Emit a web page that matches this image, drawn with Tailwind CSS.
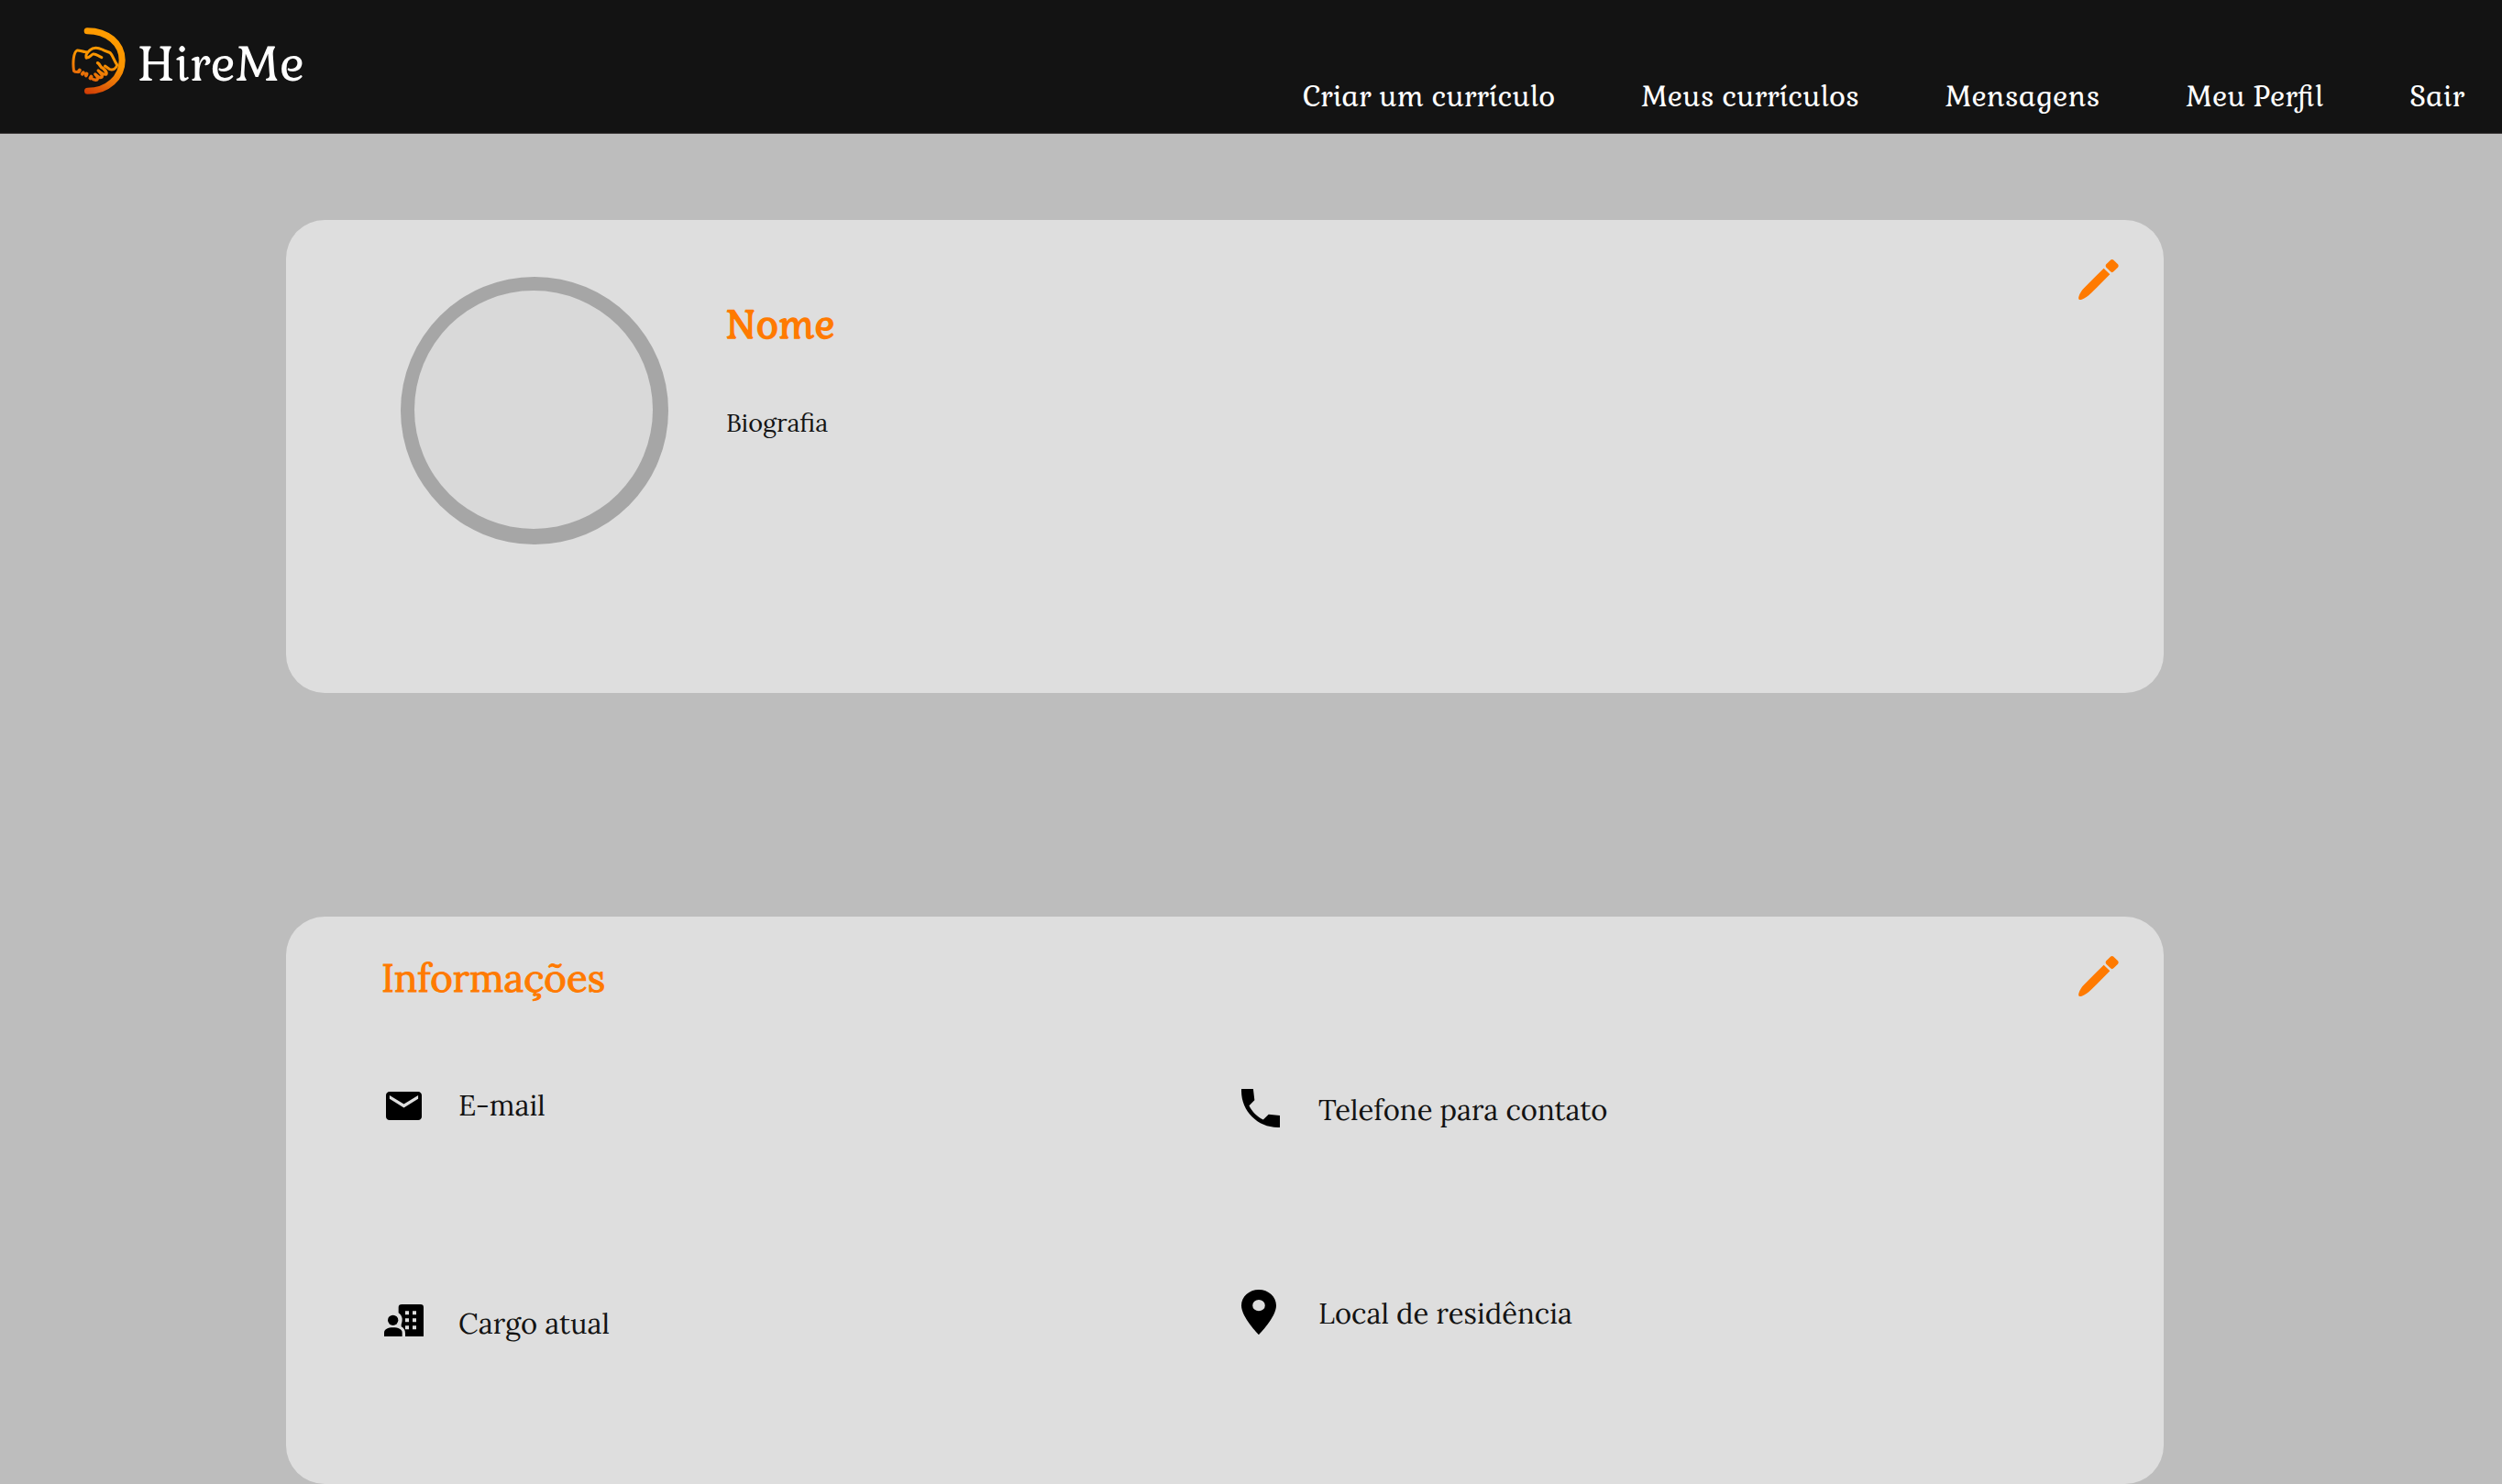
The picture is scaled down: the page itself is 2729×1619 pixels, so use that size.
<!DOCTYPE html>
<html lang="pt-BR">
<head>
<meta charset="utf-8">
<meta name="viewport" content="width=device-width, initial-scale=1">
<title>HireMe - Meu Perfil</title>
<script src="https://cdn.jsdelivr.net/npm/@tailwindcss/browser@4"></script>
</head>
<body class="min-h-screen bg-[#bdbdbd] font-['Lora','Liberation_Serif',serif] text-[#131313]">

<header class="flex h-[146px] justify-between border-b border-[#3a3636] bg-[#131313] pl-[78px] pr-[41px] font-['Gabriela','Lora','Liberation_Serif',serif] text-white">
  <a href="#" class="mt-[30px] flex h-[73px] items-center gap-[13px]">
    <svg class="h-[73px] w-[59px]" viewBox="55 60 176 219" fill="none" stroke="url(#brand)" stroke-linecap="round" stroke-linejoin="round" aria-hidden="true">
      <defs>
        <linearGradient id="brand" gradientUnits="userSpaceOnUse" x1="165" y1="70" x2="95" y2="275">
          <stop offset="0" stop-color="#ff9c00"/>
          <stop offset=".45" stop-color="#fb9500"/>
          <stop offset=".75" stop-color="#e86d08"/>
          <stop offset="1" stop-color="#cf3a05"/>
        </linearGradient>
      </defs>
      <path stroke-width="21" d="M106 71C172 71 220 112 220 167C220 224 172 268 107 268"/>
      <g stroke-width="9">
        <path d="M103 140C92 141 83 134 73 135C61 141 58 174 62 202C67 207 72 205 75 206"/>
        <path d="M103 159C99 150 107 141 115 134C128 122 142 126 155 132C165 138 174 139 181 143C190 152 193 168 204 183C200 194 190 200 180 197L164 186"/>
        <path d="M103 159C113 160 117 151 125 147C135 145 141 153 153 158"/>
        <path stroke-width="10" d="M140 176C151 183 146 190 158 194C165 202 172 206 168 213C162 216 152 209 142 201C149 209 157 214 154 222C148 227 139 220 132 213C139 221 143 225 138 231C130 234 122 228 118 225"/>
        <path stroke-width="12" d="M78 204L81 200M90 212L93 208M102 217L104 212M116 226L119 221"/>
      </g>
    </svg>
    <span class="pt-[7px] text-[52px] leading-[64px]">HireMe</span>
  </a>
  <nav class="flex items-end gap-[94px] pb-[18px] text-[31px] leading-[44px]">
    <a href="#">Criar um currículo</a>
    <a href="#">Meus currículos</a>
    <a href="#">Mensagens</a>
    <a href="#">Meu Perfil</a>
    <a href="#">Sair</a>
  </nav>
</header>

<main class="ml-[312px] mr-[369px] flex flex-col gap-[244px] pt-[94px]">
  <section class="flex min-h-[516px] items-start rounded-[42px] bg-[#dedede] pl-[125px] pr-[49px]">
    <div class="mt-[62px] size-[292px] shrink-0 rounded-full bg-[#a6a6a6] pl-[15px] pt-[15px]">
      <div class="size-[260px] rounded-full bg-[#d9d9d9]"></div>
    </div>
    <div class="ml-[63px] mt-[88px] flex flex-1 flex-col gap-[61px]">
      <h1 class="font-['Gabriela','Lora','Liberation_Serif',serif] text-[42px] font-bold leading-[54px] text-[#ff7a00]">Nome</h1>
      <p class="text-[27px] leading-[36px]">Biografia</p>
    </div>
    <button type="button" aria-label="Editar perfil" class="mt-[43px] text-[#ff7a00]">
      <svg class="size-11" viewBox="0 0 132 132" fill="currentColor" aria-hidden="true">
        <path d="M105 2Q110-2 115 2L129 16Q133 21 129 26L115 40Q110 45 105 40L91 26Q87 21 91 16Z"/>
        <path d="M83 29L103 49L44 108Q26 126 9 132Q-2 134 1 122Q6 105 22 90Z"/>
      </svg>
    </button>
  </section>

  <section class="min-h-[619px] rounded-[42px] bg-[#dedede] pl-[104px] pr-[49px]">
    <div class="flex items-start justify-between">
      <h2 class="mt-10 text-[42px] leading-[54px] text-[#ff7a00] [-webkit-text-stroke:1px_#ff7a00]">Informações</h2>
      <button type="button" aria-label="Editar informações" class="mt-[43px] text-[#ff7a00]">
        <svg class="size-11" viewBox="0 0 132 132" fill="currentColor" aria-hidden="true">
          <path d="M105 2Q110-2 115 2L129 16Q133 21 129 26L115 40Q110 45 105 40L91 26Q87 21 91 16Z"/>
          <path d="M83 29L103 49L44 108Q26 126 9 132Q-2 134 1 122Q6 105 22 90Z"/>
        </svg>
      </button>
    </div>
    <div class="mr-[19px] mt-[87px] grid grid-cols-2 text-[31px] leading-[44px]">
      <ul class="flex flex-col gap-[186px]">
        <li class="flex h-[50px] items-center gap-9">
          <span class="flex w-12 justify-center">
            <svg class="h-[31px] w-[39px]" viewBox="2 4 20 16" preserveAspectRatio="none" aria-hidden="true"><path d="M20 4H4c-1.100 0-2 .9-2 2v12c0 1.100.9 2 2 2h16c1.100 0 2-.9 2-2V6c0-1.100-.9-2-2-2zm0 4l-8 5-8-5V6l8 5 8-5z"/></svg>
          </span>
          <span>E-mail</span>
        </li>
        <li class="flex h-[50px] items-center gap-9">
          <span class="flex w-12 justify-center pb-1">
            <svg class="h-[35px] w-[43px]" viewBox="0 0 129 105" aria-hidden="true">
              <path fill-rule="evenodd" d="M58 0H119Q129 0 129 10V105H69V95Q69 80 56 73V66Q59 58 59 51Q59 36 47 28V10Q47 0 58 0ZM69 22V34H81V22ZM93 22V34H105V22ZM69 46V58H81V46ZM93 46V58H105V46ZM69 70V82H81V70ZM93 70V82H105V70Z"/>
              <circle cx="29" cy="52" r="17"/>
              <path d="M0 105V93C0 82 12 76 29 76C47 76 59 82 59 93V105Z"/>
            </svg>
          </span>
          <span class="pt-1">Cargo atual</span>
        </li>
      </ul>
      <ul class="mt-[3px] flex flex-col gap-[172px]">
        <li class="flex h-[50px] items-center gap-9">
          <span class="flex w-12">
            <svg class="size-[42px]" viewBox="3 3 18 18" aria-hidden="true"><path d="M21 15.460l-5.270-.61-2.520 2.520c-2.830-1.440-5.150-3.750-6.590-6.590l2.530-2.530L8.540 3H3.030C2.450 13.180 10.820 21.550 21 20.970z"/></svg>
          </span>
          <span class="pt-1">Telefone para contato</span>
        </li>
        <li class="flex h-[50px] items-center gap-9">
          <span class="flex w-12">
            <svg class="h-[49px] w-[38px]" viewBox="5 2 14 20" preserveAspectRatio="none" aria-hidden="true"><path d="M12 2C8.130 2 5 5.130 5 9c0 5.250 7 13 7 13s7-7.750 7-13c0-3.870-3.130-7-7-7zm0 9.500a2.500 2.500 0 1 1 0-5 2.500 2.500 0 0 1 0 5z"/></svg>
          </span>
          <span class="pt-1">Local de residência</span>
        </li>
      </ul>
    </div>
  </section>
</main>

</body>
</html>
